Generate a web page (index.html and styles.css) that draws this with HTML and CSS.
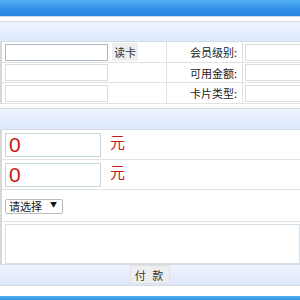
FILE: index.html
```html
<!DOCTYPE html>
<html lang="zh">
<head>
    <meta charset="UTF-8">
    <title>会员付款</title>
    <link rel="stylesheet" href="styles.css">
</head>
<body>
    <div class="page">
        <div class="topbar"></div>

        <!-- 会员信息 -->
        <div class="section-head"></div>
        <div class="info">
            <div class="cell c1"><input type="text" class="txt focus"><button class="btn">读卡</button></div>
            <div class="cell lbl">会员级别:</div>
            <div class="cell c3"><input type="text" class="txt wide"></div>

            <div class="cell c1"><input type="text" class="txt"></div>
            <div class="cell lbl">可用金额:</div>
            <div class="cell c3"><input type="text" class="txt wide"></div>

            <div class="cell c1"><input type="text" class="txt"></div>
            <div class="cell lbl">卡片类型:</div>
            <div class="cell c3"><input type="text" class="txt wide"></div>
        </div>

        <!-- 付款 -->
        <div class="section-head second"></div>
        <div class="pay">
            <div class="row money"><input type="text" class="amount" value="0"><span class="unit">元</span></div>
            <div class="row money"><input type="text" class="amount" value="0"><span class="unit">元</span></div>
            <div class="row pick">
                <div class="sel-wrap">
                    <select class="sel"><option>请选择</option></select>
                    <span class="arrow">▼</span>
                </div>
            </div>
            <div class="row memo"><textarea></textarea></div>
        </div>
        <div class="footer">
            <button class="btn pay-btn">付 款</button>
        </div>
        <div class="bottombar"></div>
    </div>
</body>
</html>
```

FILE: styles.css
```css
body {
    margin: 0;
    background: #fff;
    font-family: "Noto Sans CJK SC", "Noto Sans", sans-serif;
    font-size: 12px;
    color: #333;
}

.page {
    width: 300px;
    overflow: hidden;
}

.topbar {
    height: 16px;
    background: linear-gradient(#55b0f4, #2f8fe6 60%, #2585e0);
    border-bottom: 1px solid #c8dcf0;
}

.section-head {
    height: 19px;
    margin-top: 4px;
    background: linear-gradient(#eef3fe, #dfe9fd);
    border-top: 1px solid #d5dbe3;
    border-bottom: 1px solid #d5dbe3;
}

.section-head.second {
    height: 20px;
    margin-top: 4px;
}

.info {
    display: grid;
    grid-template-columns: 167px 76px 80px;
    grid-template-rows: 21px 20px 21px;
}

.cell {
    display: flex;
    align-items: center;
    box-sizing: border-box;
    border-bottom: 1px solid #e2e2e2;
    border-right: 1px solid #e2e2e2;
    white-space: nowrap;
}

.info .c1 {
    padding-left: 3px;
    border-left: 2px solid #d8d8d8;
}

.info .lbl {
    justify-content: flex-end;
    padding-right: 5px;
    font-size: 11px;
    color: #222;
}

.info .c3 {
    padding-left: 2px;
    border-right: none;
}

.txt {
    box-sizing: border-box;
    width: 103px;
    height: 17px;
    border: 1px solid #d6dde3;
    padding: 0;
}

.txt.focus {
    border-color: #a8b8c8;
}

.txt.wide {
    width: 120px;
}

.btn {
    height: 18px;
    margin-left: 4px;
    padding: 0 2px;
    border: none;
    background: #eeeeee;
    font-family: inherit;
    font-size: 11px;
    color: #333;
    white-space: nowrap;
}

.pay {
    border-left: 2px solid #d8d8d8;
}

.row {
    display: flex;
    align-items: center;
    padding-left: 3px;
    border-bottom: 1px solid #e2e2e2;
}

.money {
    height: 29px;
}

.amount {
    box-sizing: border-box;
    width: 96px;
    height: 24px;
    border: 1px solid #c5d8e0;
    padding: 0 3px;
    font-family: "Liberation Sans", sans-serif;
    font-size: 21px;
    color: #c81a1a;
}

.unit {
    margin-left: 9px;
    margin-bottom: 6px;
    font-size: 15px;
    color: #c81a1a;
}

.pick {
    height: 31px;
}

.sel-wrap {
    position: relative;
}

.sel {
    appearance: none;
    box-sizing: border-box;
    width: 58px;
    height: 15px;
    padding: 0 0 0 3px;
    border: 1px solid #bbb;
    border-radius: 2px;
    background: #fff;
    font-family: inherit;
    font-size: 11px;
    line-height: 13px;
    color: #222;
}

.arrow {
    position: absolute;
    right: 6px;
    top: 2px;
    font-size: 7px;
    color: #111;
}

.memo {
    padding: 2px 0 0 3px;
    border-bottom: none;
}

.memo textarea {
    box-sizing: border-box;
    width: 100%;
    height: 40px;
    margin: 0;
    border: 1px solid #d6dde3;
    resize: none;
    display: block;
}

.footer {
    height: 20px;
    text-align: center;
    background: linear-gradient(#eff3fd, #dce7fb);
    border-top: 1px solid #d5dbe3;
    border-bottom: 1px solid #d5dbe3;
}

.pay-btn {
    margin: 0;
    height: 19px;
    padding: 0 4px;
    letter-spacing: 2px;
    border: 1px solid #e0e0e0;
    vertical-align: top;
}

.bottombar {
    height: 6px;
    margin-top: 10px;
    background: linear-gradient(#55b0f4, #2585e0);
}
```
